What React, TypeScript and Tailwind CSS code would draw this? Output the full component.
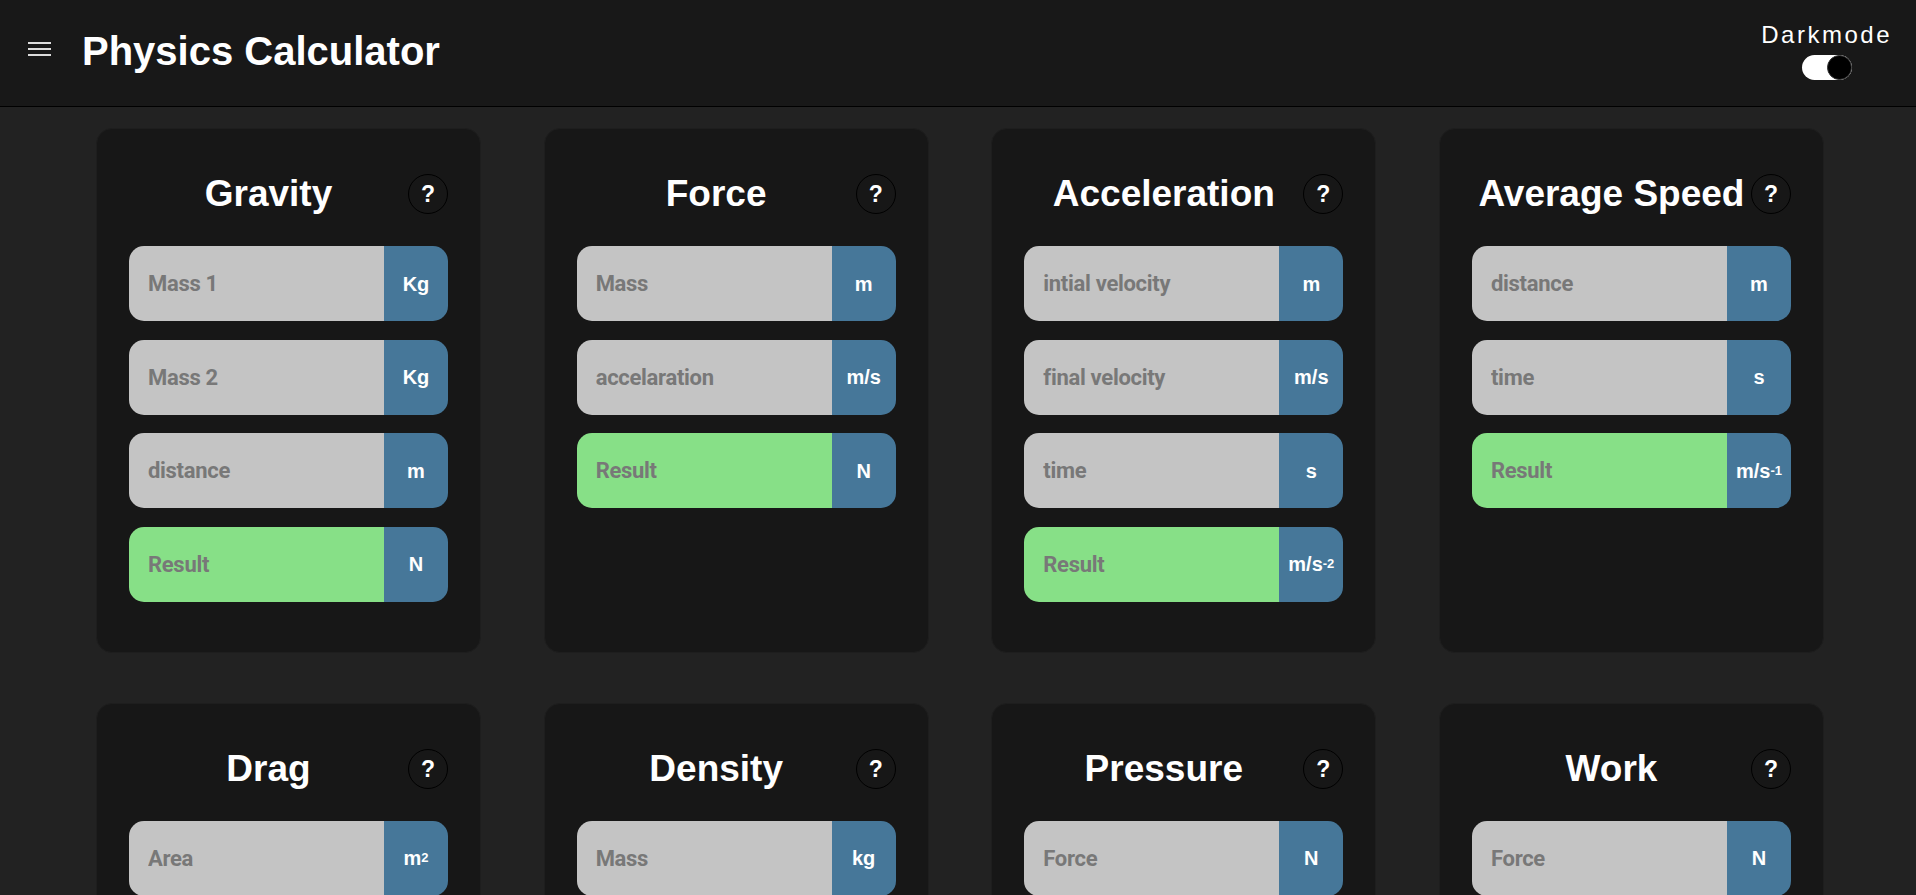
import React from 'react';

type Unit = { base: string; sup?: string };
type Card = { title: string; fields: [string, Unit][]; result: Unit };

const cards: Card[] = [
  {
    title: 'Gravity',
    fields: [
      ['Mass 1', { base: 'Kg' }],
      ['Mass 2', { base: 'Kg' }],
      ['distance', { base: 'm' }],
    ],
    result: { base: 'N' },
  },
  {
    title: 'Force',
    fields: [
      ['Mass', { base: 'm' }],
      ['accelaration', { base: 'm/s' }],
    ],
    result: { base: 'N' },
  },
  {
    title: 'Acceleration',
    fields: [
      ['intial velocity', { base: 'm' }],
      ['final velocity', { base: 'm/s' }],
      ['time', { base: 's' }],
    ],
    result: { base: 'm/s', sup: '-2' },
  },
  {
    title: 'Average Speed',
    fields: [
      ['distance', { base: 'm' }],
      ['time', { base: 's' }],
    ],
    result: { base: 'm/s', sup: '-1' },
  },
  {
    title: 'Drag',
    fields: [
      ['Area', { base: 'm', sup: '2' }],
      ['velocity', { base: 'm/s' }],
      ['density', { base: 'kg/m', sup: '3' }],
    ],
    result: { base: 'N' },
  },
  {
    title: 'Density',
    fields: [
      ['Mass', { base: 'kg' }],
      ['Volume', { base: 'm', sup: '3' }],
    ],
    result: { base: 'kg/m', sup: '3' },
  },
  {
    title: 'Pressure',
    fields: [
      ['Force', { base: 'N' }],
      ['Area', { base: 'm', sup: '2' }],
    ],
    result: { base: 'Pa' },
  },
  {
    title: 'Work',
    fields: [
      ['Force', { base: 'N' }],
      ['distance', { base: 'm' }],
    ],
    result: { base: 'J' },
  },
];

function UnitLabel({ unit }: { unit: Unit }) {
  return (
    <div className="flex w-[64px] shrink-0 items-center justify-center bg-[#467799] text-[20px] font-bold text-white">
      <span>
        {unit.base}
        {unit.sup && <span className="relative -top-[3px] text-[13px]">{unit.sup}</span>}
      </span>
    </div>
  );
}

function Field({ label, unit, result }: { label: string; unit: Unit; result?: boolean }) {
  return (
    <div className="flex h-[75px] overflow-hidden rounded-[15px]">
      <input
        placeholder={label}
        readOnly={result}
        className={`min-w-0 flex-1 pl-[19px] text-[22px] font-bold tracking-[-0.3px] text-[#333] outline-none placeholder:text-[#787878] [font-family:Roboto,sans-serif] ${
          result ? 'bg-[#87e087]' : 'bg-[#c4c4c4]'
        }`}
      />
      <UnitLabel unit={unit} />
    </div>
  );
}

function CalcCard({ card }: { card: Card }) {
  return (
    <div className="rounded-2xl border border-[#1e1e1e] bg-[#171717] px-[32px] pt-[45px] pb-[50px]">
      <div className="flex h-10 items-center">
        <h2 className="flex-1 text-center text-[37px] font-bold text-white">{card.title}</h2>
        <button className="flex h-10 w-10 shrink-0 items-center justify-center rounded-full border border-black text-[23px] font-bold text-white">
          ?
        </button>
      </div>
      <div className="mt-[32px] flex flex-col gap-[18.67px]">
        {card.fields.map(([label, unit]) => (
          <Field key={label} label={label} unit={unit} />
        ))}
        <Field label="Result" unit={card.result} result />
      </div>
    </div>
  );
}

export default function App() {
  return (
    <div className="h-screen overflow-hidden bg-[#222222] [font-family:'Liberation_Sans',Arial,sans-serif]">
      <header className="flex h-[107px] justify-between border-b border-black bg-[#181818]">
        <div className="flex items-center pb-[5px] pl-[28px]">
          <svg width="23" height="14" viewBox="0 0 23 14" className="mb-[4px]">
            <rect x="0" y="0" width="23" height="2" fill="#dcdcdc" />
            <rect x="0" y="6" width="23" height="2" fill="#dcdcdc" />
            <rect x="0" y="12" width="23" height="2" fill="#dcdcdc" />
          </svg>
          <h1 className="ml-[31px] text-[40px] leading-[46px] font-bold text-white">Physics Calculator</h1>
        </div>
        <div className="flex flex-col items-center pt-[21px] pr-[24px]">
          <span className="text-[24px] leading-[28px] tracking-[2.5px] text-white">Darkmode</span>
          <div className="mt-[6px] flex h-[25px] w-[50px] justify-end rounded-full bg-white">
            <div className="h-[25px] w-[25px] rounded-full border border-[#333] bg-black" />
          </div>
        </div>
      </header>
      <main className="grid grid-cols-[repeat(4,385px)] gap-x-[62.67px] gap-y-[50px] pt-[21px] pl-[96px]">
        {cards.map((card) => (
          <CalcCard key={card.title} card={card} />
        ))}
      </main>
    </div>
  );
}
